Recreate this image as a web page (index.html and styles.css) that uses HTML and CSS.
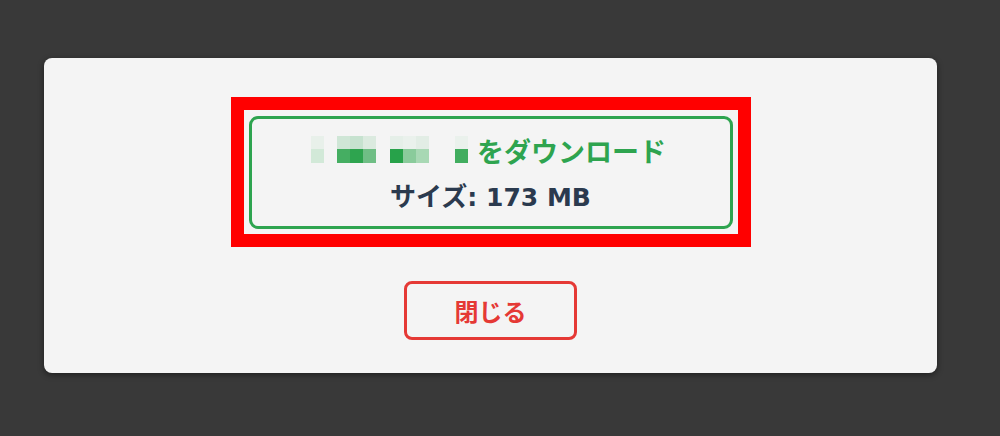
FILE: index.html
```html
<!DOCTYPE html>
<html lang="ja">
<head>
<meta charset="utf-8">
<link rel="stylesheet" href="styles.css">
</head>
<body>
<div class="card">
  <div class="highlight">
    <div class="download">
      <div class="line1">
        <span class="mosaic">
          <i class="a1"></i><i></i><i class="a2"></i><i class="a3"></i><i class="a4"></i><i></i><i class="a5"></i><i class="a6"></i><i class="a7"></i><i></i><i></i><i class="a6"></i>
          <i class="b1"></i><i></i><i class="b2"></i><i class="b3"></i><i class="b4"></i><i></i><i class="b5"></i><i class="b6"></i><i class="b7"></i><i></i><i></i><i class="b8"></i>
        </span>
        <span class="dl-text">をダウンロード</span>
      </div>
      <div class="line2"><span class="kana">サイズ</span>: 173 MB</div>
    </div>
  </div>
  <button class="close">閉じる</button>
</div>
</body>
</html>
```
FILE: styles.css
```css
html, body {
  margin: 0;
  padding: 0;
  background: #393939;
  width: 1000px;
  height: 436px;
  overflow: hidden;
  font-family: "Noto Sans CJK JP", "Noto Sans", sans-serif;
}
.card {
  margin: 58px 0 0 44px;
  width: 893px;
  height: 315px;
  box-sizing: border-box;
  background: #f4f4f4;
  border-radius: 8px;
  box-shadow: 0 2px 6px rgba(0,0,0,0.45);
  padding-top: 39px;
  display: flex;
  flex-direction: column;
  align-items: center;
}
.highlight {
  width: 520px;
  height: 150px;
  box-sizing: border-box;
  border: 13px solid #ff0000;
  padding: 6px 5px 4px 5px;
}
.download {
  width: 100%;
  height: 113px;
  box-sizing: border-box;
  border: 3px solid #2ea44f;
  border-radius: 9px;
  padding-top: 10px;
  display: flex;
  flex-direction: column;
  align-items: center;
}
.line1 {
  height: 44px;
  display: flex;
  align-items: center;
  gap: 9px;
  margin-left: -4px;
}
.mosaic {
  display: grid;
  grid-template-columns: repeat(12, 13.1px);
  grid-template-rows: 13px 14px;
  margin-top: -4px;
}
.mosaic i { display: block; }
.a1 { background: #e8f0ea; }
.a2 { background: #cfe6d6; }
.a3 { background: #c6e2cf; }
.a4 { background: #dbeadf; }
.a5 { background: #e5efe8; }
.a6 { background: #eaf1ec; }
.a7 { background: #e2ede5; }
.b1 { background: #d2e9d8; }
.b2 { background: #45ae62; }
.b3 { background: #2ea44f; }
.b4 { background: #6fbe85; }
.b5 { background: #27a24a; }
.b6 { background: #8acb9b; }
.b7 { background: #a8d8b4; }
.b8 { background: #41ad5f; }
.dl-text {
  color: #2ea44f;
  font-size: 27px;
  font-weight: 700;
  line-height: 44px;
}
.line2 {
  height: 44px;
  line-height: 44px;
  color: #2b3a4e;
  font-family: "DejaVu Sans", "Noto Sans CJK JP", sans-serif;
  font-size: 25px;
  font-weight: 700;
}
.kana {
  font-family: "Noto Sans CJK JP", sans-serif;
  font-size: 26px;
}
.close {
  margin-top: 34px;
  width: 173px;
  height: 59px;
  box-sizing: border-box;
  border: 3px solid #e53935;
  border-radius: 8px;
  background: transparent;
  color: #e53935;
  font-family: "Noto Sans CJK JP", "Noto Sans", sans-serif;
  font-size: 24px;
  font-weight: 700;
  padding: 0;
  cursor: pointer;
}
```
